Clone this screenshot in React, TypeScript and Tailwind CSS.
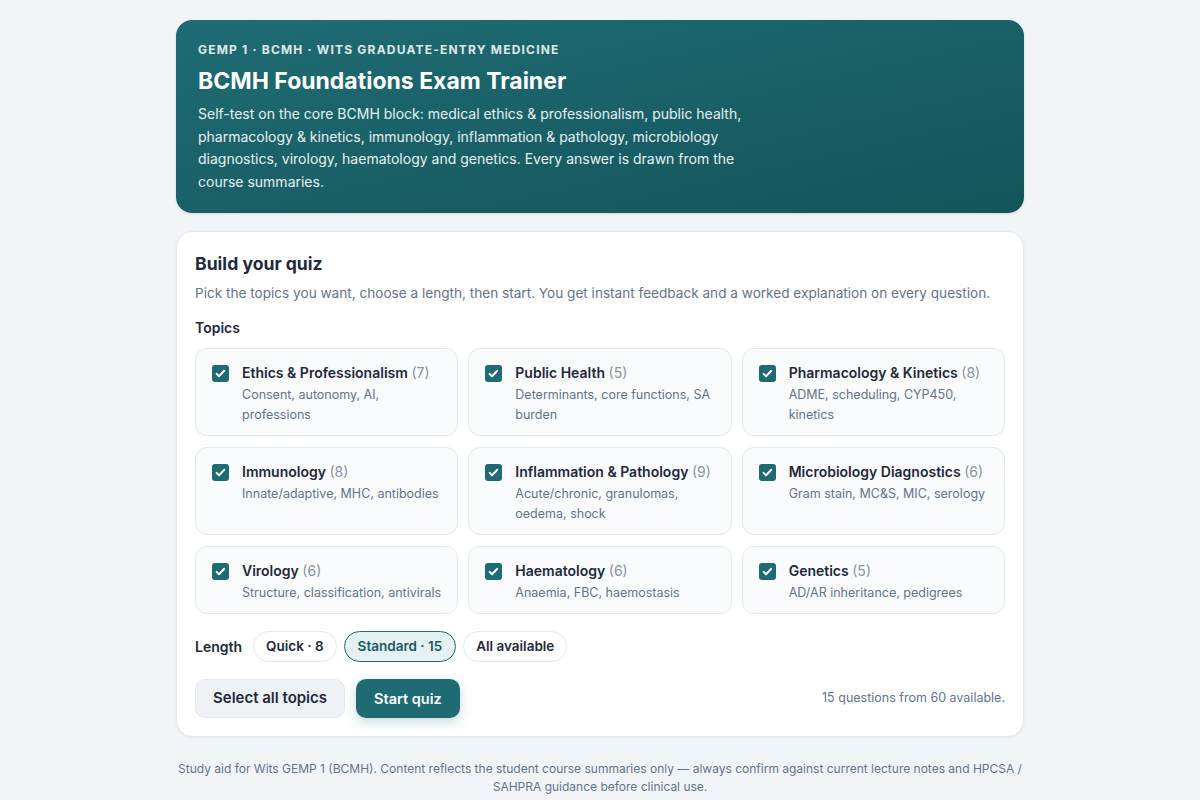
import { useState } from "react";

const topics = [
  { name: "Ethics & Professionalism", count: 7, blurb: "Consent, autonomy, AI, professions" },
  { name: "Public Health", count: 5, blurb: "Determinants, core functions, SA burden" },
  { name: "Pharmacology & Kinetics", count: 8, blurb: "ADME, scheduling, CYP450, kinetics" },
  { name: "Immunology", count: 8, blurb: "Innate/adaptive, MHC, antibodies" },
  { name: "Inflammation & Pathology", count: 9, blurb: "Acute/chronic, granulomas, oedema, shock" },
  { name: "Microbiology Diagnostics", count: 6, blurb: "Gram stain, MC&S, MIC, serology" },
  { name: "Virology", count: 6, blurb: "Structure, classification, antivirals" },
  { name: "Haematology", count: 6, blurb: "Anaemia, FBC, haemostasis" },
  { name: "Genetics", count: 5, blurb: "AD/AR inheritance, pedigrees" },
];

const lengths = [
  { label: "Quick · 8", value: 8 },
  { label: "Standard · 15", value: 15 },
  { label: "All available", value: 0 },
];

function Tick({ on }: { on: boolean }) {
  return (
    <span
      className={
        on
          ? "mt-[2px] flex size-[17px] shrink-0 items-center justify-center rounded-[3px] bg-[#1f6b73]"
          : "mt-[2px] flex size-[17px] shrink-0 items-center justify-center rounded-[3px] border border-[#94a3b8] bg-white"
      }
    >
      {on && (
        <svg viewBox="0 0 16 16" className="size-[13px]" fill="none">
          <path d="M3.2 8.4l3 3 6.4-6.8" stroke="#fff" strokeWidth="2.4" strokeLinecap="round" strokeLinejoin="round" />
        </svg>
      )}
    </span>
  );
}

export default function App() {
  const [picked, setPicked] = useState<boolean[]>(topics.map(() => true));
  const [len, setLen] = useState(15);

  const available = topics.reduce((n, t, i) => (picked[i] ? n + t.count : n), 0);
  const total = len === 0 ? available : Math.min(len, available);

  return (
    <div className="min-h-screen bg-[#f2f5f8] font-['Inter','Noto_Sans',sans-serif] text-[#1e293b]">
      <div className="mx-auto w-[848px] pt-5 pb-3">
        <header className="rounded-2xl bg-gradient-to-br from-[#1f6c74] to-[#14545b] px-[22px] pt-[22px] pb-5 text-white shadow-sm">
          <p className="text-[12px] leading-4 font-bold uppercase tracking-[0.1em] text-white/85">
            GEMP 1 · BCMH · Wits Graduate-Entry Medicine
          </p>
          <h1 className="mt-[7px] text-[23px] leading-8 font-bold">BCMH Foundations Exam Trainer</h1>
          <p className="mt-[6px] max-w-[560px] text-[14px] leading-[22.5px] text-white/90">
            Self-test on the core BCMH block: medical ethics &amp; professionalism, public health, pharmacology &amp;
            kinetics, immunology, inflammation &amp; pathology, microbiology diagnostics, virology, haematology and
            genetics. Every answer is drawn from the course summaries.
          </p>
        </header>

        <section className="mt-[18px] rounded-2xl border border-[#e2e8f0] bg-white px-[18px] pt-[19px] pb-[18px] shadow-[0_1px_3px_rgba(15,23,42,0.06)]">
          <h2 className="text-[17.6px] leading-[26px] font-bold text-[#1e293b]">Build your quiz</h2>
          <p className="mt-[6px] text-[13.6px] leading-5 text-[#64748b]">
            Pick the topics you want, choose a length, then start. You get instant feedback and a worked explanation on
            every question.
          </p>

          <h3 className="mt-[15px] text-[14px] leading-5 font-semibold text-[#1e293b]">Topics</h3>
          <div className="mt-[10px] grid grid-cols-3 gap-x-[10px] gap-y-[11px]">
            {topics.map((t, i) => (
              <button
                key={t.name}
                type="button"
                onClick={() => setPicked(p => p.map((v, j) => (j === i ? !v : v)))}
                className="flex gap-[13px] rounded-xl border border-[#e2e8f0] bg-[#f9fbfc] px-4 pt-[14px] pb-[10px] text-left"
              >
                <Tick on={picked[i]} />
                <span className="flex flex-col">
                  <span className="text-[14px] leading-5 font-semibold text-[#1e293b]">
                    {t.name} <span className="font-normal text-[#8a94a3]">({t.count})</span>
                  </span>
                  <span className="mt-[2px] text-[12.5px] leading-5 text-[#64748b]">{t.blurb}</span>
                </span>
              </button>
            ))}
          </div>

          <div className="mt-[17px] flex items-center gap-[7px]">
            <span className="mr-[4px] text-[14px] font-semibold text-[#1e293b]">Length</span>
            {lengths.map(l => (
              <button
                key={l.label}
                type="button"
                onClick={() => setLen(l.value)}
                className={
                  len === l.value
                    ? "h-[31px] rounded-full border border-[#1f6b73] bg-[#e6f2f2] px-[13px] text-[13.5px] font-semibold text-[#175a61]"
                    : "h-[31px] rounded-full border border-[#e2e8f0] bg-white px-[12px] text-[13.5px] font-semibold text-[#1e293b]"
                }
              >
                {l.label}
              </button>
            ))}
          </div>

          <div className="mt-[17px] flex items-center gap-[11px]">
            <button
              type="button"
              onClick={() => setPicked(topics.map(() => true))}
              className="h-[39px] rounded-[10px] border border-[#e2e8f0] bg-[#eef2f6] px-[17px] text-[15px] font-semibold text-[#1e293b]"
            >
              Select all topics
            </button>
            <button
              type="button"
              className="h-[39px] rounded-[10px] bg-[#1f6b73] px-[18px] text-[14.5px] font-semibold text-white shadow-[0_4px_12px_rgba(31,107,115,0.25)]"
            >
              Start quiz
            </button>
            <span className="ml-auto text-[12.5px] text-[#64748b]">
              {total} questions from {available} available.
            </span>
          </div>
        </section>

        <footer className="mt-[23px] text-center text-[12px] leading-[18px] text-[#64748b]">
          Study aid for Wits GEMP 1 (BCMH). Content reflects the student course summaries only — always confirm against
          current lecture notes and HPCSA / SAHPRA guidance before clinical use.
        </footer>
      </div>
    </div>
  );
}
